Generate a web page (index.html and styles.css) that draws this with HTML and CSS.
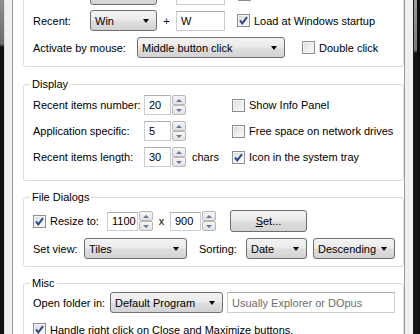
FILE: index.html
```html
<!DOCTYPE html>
<html lang="en">
<head>
    <meta charset="UTF-8">
    <meta name="viewport" content="width=device-width, initial-scale=1.0">
    <title>Options</title>
    <link rel="stylesheet" href="styles.css">
</head>
<body>
    <div class="window">
        <div class="edge-left"></div>
        <div class="frame">
            <div class="panel">
                <fieldset class="group hotkeys">
                    <div class="row row-first">
                        <span class="lbl lbl-recent"></span>
                        <span class="button btn-hotkey"></span>
                        <span class="plus"></span>
                        <span class="field field-key"></span>
                        <span class="cb cb-top"><span class="box"></span></span>
                    </div>
                    <div class="row row-second">
                        <span class="lbl lbl-recent">Recent:</span>
                        <span class="select sel-mod">Win</span>
                        <span class="plus">+</span>
                        <span class="field field-key">W</span>
                        <label class="cb cb-startup"><span class="box"><svg viewBox="0 0 11 11"><path d="M2 5.5 L4.3 8.3 L9 2.2"/></svg></span>Load at Windows startup</label>
                    </div>
                    <div class="row">
                        <span class="lbl lbl-mouse">Activate by mouse:</span>
                        <span class="select sel-mouse">Middle button click</span>
                        <label class="cb cb-double"><span class="box"></span>Double click</label>
                    </div>
                </fieldset>

                <fieldset class="group display">
                    <legend>Display</legend>
                    <div class="row row-num">
                        <div class="num-cell">
                            <span class="lbl lbl-display">Recent items number:</span>
                            <span class="field num">20</span>
                            <span class="spin"><i class="up"></i><i class="down"></i></span>
                        </div>
                        <label class="cb"><span class="box"></span>Show Info Panel</label>
                    </div>
                    <div class="row row-num">
                        <div class="num-cell">
                            <span class="lbl lbl-display">Application specific:</span>
                            <span class="field num">5</span>
                            <span class="spin"><i class="up"></i><i class="down"></i></span>
                        </div>
                        <label class="cb"><span class="box"></span>Free space on network drives</label>
                    </div>
                    <div class="row row-num">
                        <div class="num-cell">
                            <span class="lbl lbl-display">Recent items length:</span>
                            <span class="field num">30</span>
                            <span class="spin"><i class="up"></i><i class="down"></i></span>
                            <span class="unit">chars</span>
                        </div>
                        <label class="cb"><span class="box"><svg viewBox="0 0 11 11"><path d="M2 5.5 L4.3 8.3 L9 2.2"/></svg></span>Icon in the system tray</label>
                    </div>
                </fieldset>

                <fieldset class="group dialogs">
                    <legend>File Dialogs</legend>
                    <div class="row row-tall">
                        <label class="cb cb-resize"><span class="box"><svg viewBox="0 0 11 11"><path d="M2 5.5 L4.3 8.3 L9 2.2"/></svg></span>Resize to:</label>
                        <span class="field num-wide">1100</span>
                        <span class="spin"><i class="up"></i><i class="down"></i></span>
                        <span class="times">x</span>
                        <span class="field num-wide">900</span>
                        <span class="spin"><i class="up"></i><i class="down"></i></span>
                        <span class="button btn-set"><u>S</u>et...</span>
                    </div>
                    <div class="row">
                        <span class="lbl lbl-view">Set view:</span>
                        <span class="select sel-view">Tiles</span>
                        <span class="lbl lbl-sort">Sorting:</span>
                        <span class="select sel-date">Date</span>
                        <span class="select sel-order">Descending</span>
                    </div>
                </fieldset>

                <fieldset class="group misc">
                    <legend>Misc</legend>
                    <div class="row">
                        <span class="lbl lbl-open">Open folder in:</span>
                        <span class="select sel-program">Default Program</span>
                        <span class="field field-path placeholder">Usually Explorer or DOpus</span>
                    </div>
                    <div class="row row-next">
                        <label class="cb"><span class="box"><svg viewBox="0 0 11 11"><path d="M2 5.5 L4.3 8.3 L9 2.2"/></svg></span>Handle right click on Close and Maximize buttons.</label>
                    </div>
                </fieldset>
            </div>
        </div>
        <div class="edge-right"></div>
    </div>
</body>
</html>
```

FILE: styles.css
```css
body {
    margin: 0;
    padding: 0;
    background: #000;
    font-family: "Liberation Sans", Arial, sans-serif;
    font-size: 11px;
    color: #000;
}
.window {
    display: flex;
    width: 420px;
    height: 334px;
    overflow: hidden;
}
.edge-left {
    width: 4px;
    background: linear-gradient(to bottom, #8e8e8e 0, #6c6c6c 44px, #121212 47px);
}
.frame {
    width: 409px;
    display: flex;
    background: #f0f0f0;
    border-left: 1px solid #dcdcdc;
    padding: 0 8px 0 7px;
    box-sizing: border-box;
}
.panel {
    width: 393px;
    box-sizing: border-box;
    background: #fff;
    border-left: 1px solid #9a9a9a;
    border-right: 1px solid #9a9a9a;
    padding-left: 10px;
}
.edge-right {
    width: 7px;
    box-sizing: border-box;
    border-left: 1px solid #1c1c1c;
    border-right: 3px solid #0e0e0e;
    background: linear-gradient(to bottom, #9a9a9a 0, #7a7a7a 50px, #141414 53px);
}

/* group boxes */
.group {
    margin: 9px 0 0 0;
    padding: 0 9px;
    border: 1px solid #d5dfe5;
    border-radius: 3px;
    min-width: 0;
}
.group legend {
    padding: 0 2px;
    margin-left: -3px;
    line-height: 15px;
}
.hotkeys {
    margin-top: -30px;
    padding-top: 13px;
    padding-bottom: 8px;
}
.display {
    margin-top: 10px;
    padding-top: 3px;
    padding-bottom: 13px;
}
.dialogs {
    padding-top: 5px;
    padding-bottom: 7px;
}
.misc {
    padding-top: 1px;
}

/* rows */
.row {
    display: flex;
    align-items: center;
    height: 21px;
    margin-top: 6px;
    white-space: nowrap;
}
.row-first {
    margin-top: 0;
}
.row-second {
    margin-top: 5px;
}
.group legend + .row {
    margin-top: 0;
}
.row-num {
    height: 20px;
}
.row-tall {
    height: 22px;
}
.num-cell {
    display: flex;
    align-items: center;
    width: 199px;
}

/* labels */
.lbl {
    flex: none;
}
.lbl-recent { width: 57px; }
.lbl-mouse { width: 104px; }
.lbl-display { width: 111px; }
.lbl-view { width: 51px; }
.lbl-sort { width: 47px; margin-left: 12px; }
.lbl-open { width: 77px; }
.plus {
    width: 19px;
    text-align: center;
}
.times {
    width: 17px;
    text-align: center;
}
.unit {
    margin-left: 6px;
}

/* controls */
.select, .button {
    box-sizing: border-box;
    height: 21px;
    border: 1px solid #707070;
    border-radius: 3px;
    background: linear-gradient(to bottom, #f3f3f3 0, #ebebeb 45%, #dedede 55%, #d3d3d3 100%);
    display: flex;
    align-items: center;
    flex: none;
}
.select {
    padding: 0 7px 0 4px;
}
.select::after {
    content: "";
    margin-left: auto;
    border-top: 4px solid #000;
    border-left: 3.5px solid transparent;
    border-right: 3.5px solid transparent;
}
.button {
    justify-content: center;
}
.btn-hotkey { width: 67px; }
.btn-set {
    width: 77px;
    height: 22px;
    margin-left: 14px;
}
.sel-mod { width: 67px; }
.sel-mouse { width: 148px; }
.sel-view { width: 103px; }
.sel-date { width: 61px; }
.sel-order { width: 82px; margin-left: 6px; }
.sel-program { width: 113px; }

.field {
    box-sizing: border-box;
    height: 20px;
    border: 1px solid #c9ced4;
    border-top-color: #abadb3;
    background: #fff;
    padding: 0 4px;
    display: flex;
    align-items: center;
    flex: none;
}
.field-key { width: 49px; }
.num { width: 27px; }
.num-wide { width: 31px; height: 19px; }
.field-path {
    width: 168px;
    height: 21px;
    margin-left: 4px;
}
.placeholder {
    color: #6d6d6d;
}

.spin {
    width: 14px;
    height: 20px;
    margin-left: 1px;
    display: flex;
    flex-direction: column;
    flex: none;
}
.spin i {
    flex: 1;
    box-sizing: border-box;
    border: 1px solid #b8b8b8;
    border-radius: 2px;
    background: linear-gradient(to bottom, #f6f6f6, #e3e3e3);
    display: flex;
    align-items: center;
    justify-content: center;
}
.spin i::after {
    content: "";
    border-left: 3px solid transparent;
    border-right: 3px solid transparent;
}
.spin .up::after { border-bottom: 3px solid #5f7896; }
.spin .down::after { border-top: 3px solid #5f7896; }

/* checkboxes */
.cb {
    display: flex;
    align-items: center;
    flex: none;
}
.box {
    box-sizing: border-box;
    width: 13px;
    height: 13px;
    margin-right: 4px;
    border: 1px solid #8e8f8f;
    background: linear-gradient(135deg, #d9d9d9 0, #ededed 50%, #fbfbfb 100%);
    box-shadow: inset 0 0 0 1px #f4f4f4;
    display: flex;
    align-items: center;
    justify-content: center;
}
.box svg {
    width: 11px;
    height: 11px;
    fill: none;
    stroke: #2b4b8c;
    stroke-width: 2;
}
.cb-top { margin-left: 13px; }
.cb-startup { margin-left: 12px; }
.cb-double { margin-left: 17px; }
.cb-resize { width: 74px; }
```
